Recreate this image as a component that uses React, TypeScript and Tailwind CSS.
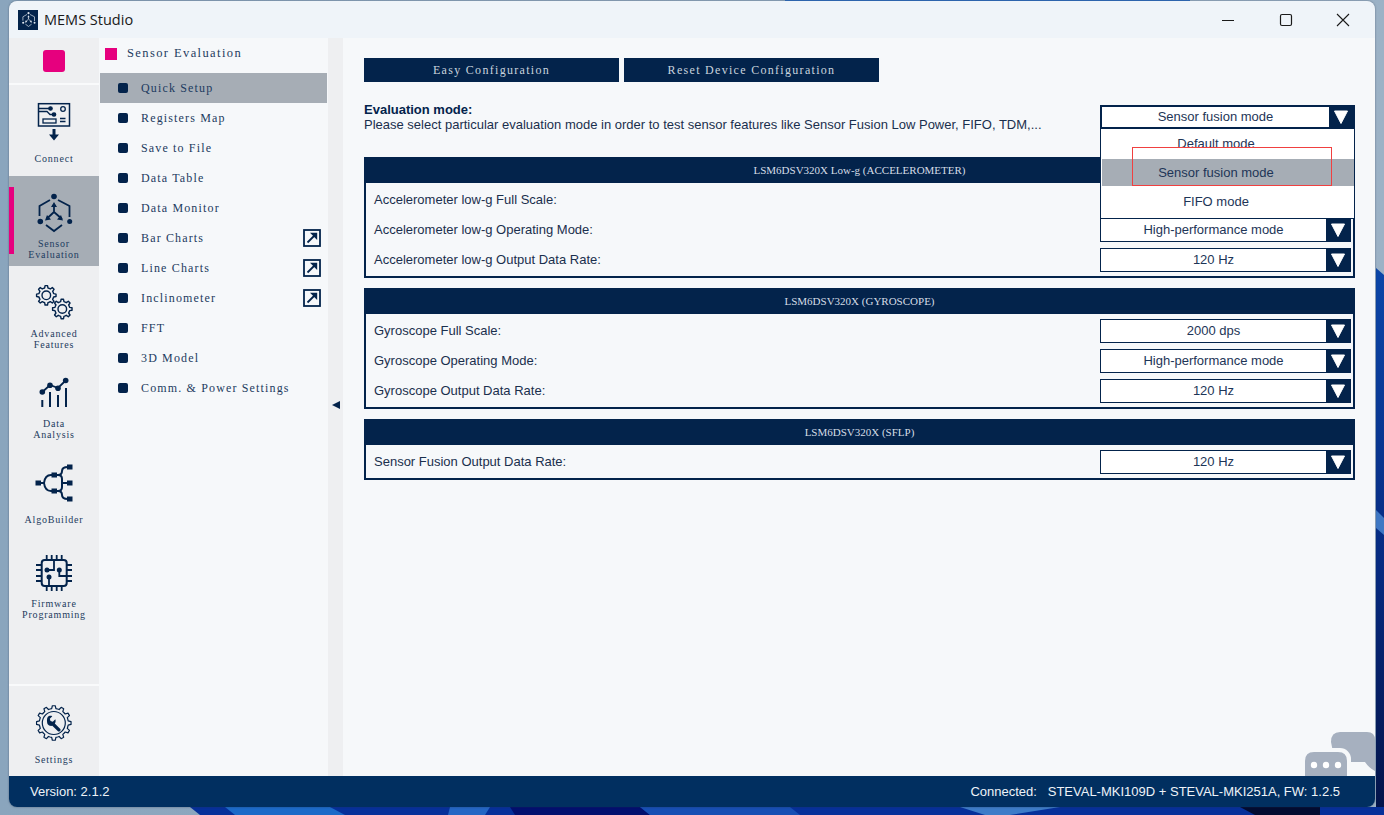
import React from "react";

const navy = "#03234b";

function gearPath(cx: number, cy: number, ro: number, ri: number, teeth: number) {
  const pts: string[] = [];
  const step = (Math.PI * 2) / teeth;
  for (let i = 0; i < teeth; i++) {
    const a = i * step;
    const list: [number, number][] = [
      [ri, a - step * 0.5],
      [ri, a - step * 0.28],
      [ro, a - step * 0.16],
      [ro, a + step * 0.16],
      [ri, a + step * 0.28],
    ];
    list.forEach(([r, t]) => {
      pts.push((cx + r * Math.cos(t)).toFixed(2) + " " + (cy + r * Math.sin(t)).toFixed(2));
    });
  }
  return "M" + pts.join("L") + "Z";
}

function HexGlyph({ color, className }: { color: string; className?: string }) {
  return (
    <svg viewBox="33 190 40 44" className={className} fill="none" stroke={color}>
      <path d="M38.5 215V205L49 199M57 199L68.5 205V216M45 224L53 230L61 224" strokeWidth="1.800" />
      <circle cx="53" cy="195.500" r="2.800" fill={color} stroke="none" />
      <circle cx="39.300" cy="220.500" r="2.800" fill={color} stroke="none" />
      <circle cx="68.700" cy="220.500" r="2.500" fill={color} stroke="none" />
      <path d="M53 211V204M53 211L45.500 218M53 211L61 218" strokeWidth="1.800" />
      <path d="M50 206L53 201L56 206Z M44 219.500L50 218.500L46 214Z M62 219.500L56 218.500L60 214Z" fill={color} stroke="none" />
    </svg>
  );
}

function ConnectIcon() {
  return (
    <svg viewBox="34 102 40 42" className="w-10 h-[42px]" fill="none" stroke={navy} strokeWidth="1.300">
      <rect x="38.500" y="104.700" width="31" height="22.300" strokeWidth="1.500" />
      <path d="M38.500 109.500H50M38.500 112.500H47L50 115.500H53" />
      <circle cx="50.500" cy="109.500" r="1.700" fill={navy} />
      <circle cx="54" cy="115.500" r="1.700" fill={navy} />
      <circle cx="63" cy="110" r="2.300" />
      <rect x="43" y="120" width="13" height="4" />
      <path d="M60 119.500H65.500M60 122.500H65.500" />
      <path d="M52.500 130H55.500V135.500H59L54 141.500L49 135.500H52.500Z" fill={navy} stroke="none" />
    </svg>
  );
}

function GearsIcon() {
  return (
    <svg viewBox="33 282 40 40" className="w-10 h-10" fill="none" stroke={navy} strokeWidth="1.400" strokeLinejoin="round">
      <path d={gearPath(45.300, 294.300, 9.800, 7.500, 8)} />
      <circle cx="45.300" cy="294.300" r="4.300" />
      <path d={gearPath(61.300, 308, 9.800, 7.500, 8)} />
      <circle cx="61.300" cy="308" r="4.300" />
    </svg>
  );
}

function AnalysisIcon() {
  return (
    <svg viewBox="34 375 40 36" className="w-10 h-9" fill="none" stroke={navy}>
      <path d="M42.300 392L50 385L58 388L65.700 380.500" strokeWidth="1.800" />
      <circle cx="42.300" cy="392" r="2.800" fill={navy} stroke="none" />
      <circle cx="50" cy="385.300" r="2.800" fill={navy} stroke="none" />
      <circle cx="58" cy="388.300" r="2.800" fill={navy} stroke="none" />
      <circle cx="65.700" cy="380.500" r="2.800" fill={navy} stroke="none" />
      <path d="M42.300 400V407M50 392V407M58 395V407M66 388V407" strokeWidth="2" />
    </svg>
  );
}

function AlgoIcon() {
  return (
    <svg viewBox="34 462 40 40" className="w-10 h-10" fill="none" stroke={navy} strokeWidth="2">
      <path d="M38 482H44Q45 474 51 474H58Q62 474 62 470Q62 466 68 466M58 474Q62 474 62 478V486Q62 490 58 490H51Q45 490 44 482M62 482H70M58 490Q62 490 62 494Q62 498 68 498" />
      <g fill={navy} stroke="none">
        <rect x="35.500" y="479.500" width="5.500" height="5" />
        <rect x="51.500" y="471.500" width="5.500" height="5" />
        <rect x="51.500" y="487.500" width="5.500" height="5" />
        <rect x="67" y="463.500" width="5.500" height="5" />
        <rect x="67" y="479.500" width="5.500" height="5" />
        <rect x="67" y="495.500" width="5.500" height="5" />
      </g>
    </svg>
  );
}

function ChipIcon() {
  return (
    <svg viewBox="34 552 40 40" className="w-10 h-10" fill="none" stroke={navy} strokeWidth="1.800">
      <rect x="41.700" y="559" width="25" height="26" rx="3" strokeWidth="2" />
      <path d="M46.700 554V559M51.700 554V559M56.700 554V559M61.700 554V559M46.700 585V590M51.700 585V590M56.700 585V590M61.700 585V590" />
      <path d="M36 564H41.700M36 569H41.700M36 575H41.700M36 580H41.700M66.700 564H72M66.700 569H72M66.700 575H72M66.700 580H72" />
      <path d="M47 569H54V559M59.300 569V575H66.700M49 576V585" />
      <circle cx="47" cy="569" r="2.500" fill={navy} stroke="none" />
      <circle cx="59.300" cy="569" r="2.500" fill={navy} stroke="none" />
      <circle cx="49" cy="576" r="2.500" fill={navy} stroke="none" />
    </svg>
  );
}

function SettingsIcon() {
  return (
    <svg viewBox="34 702 40 40" className="w-10 h-10" fill="none" stroke={navy} strokeWidth="1.200" strokeLinejoin="round">
      <path d={gearPath(53.800, 722, 17.300, 14.500, 12)} />
      <circle cx="53.800" cy="722" r="11.500" />
      <path
        d="M47.500 716.500C48 715 50.500 714.300 52.300 715.200L49.800 717.700L50.500 720L52.800 720.700L55.300 718.200C56 720 55.500 721.700 54.800 722.500L60.300 728C61 729 60.500 729.800 59.800 730.300C59 730.800 58.300 730.700 57.700 730L52.300 724.800C50.500 725.200 48.500 724.500 47.500 723C46.800 721 46.800 718 47.500 716.500Z"
        fill={navy}
        stroke="none"
      />
    </svg>
  );
}

function RailItem({
  label,
  icon,
  active,
  tall,
}: {
  label: string[];
  icon: React.ReactNode;
  active?: boolean;
  tall?: boolean;
}) {
  return (
    <div
      className={
        "relative flex flex-col items-center " +
        (tall ? "h-[91px]" : "h-[90px]") +
        (active ? " bg-[#a6adb5]" : "")
      }
    >
      {active && <div className="absolute left-0 top-[11px] w-[5px] h-[67px] bg-[#e6007e]" />}
      <div className="h-[50px] mt-3 flex items-center justify-center">{icon}</div>
      <div className="h-[22px] flex flex-col items-center justify-center text-[10px] leading-[11px] tracking-[0.8px] text-[#1d3b60]">
        {label.map((l) => (
          <span key={l}>{l}</span>
        ))}
      </div>
    </div>
  );
}

function PopoutIcon() {
  return (
    <svg viewBox="0 0 18 18" className="w-[18px] h-[18px] mr-[6px]" fill="none" stroke={navy}>
      <rect x="1" y="1" width="16" height="16" strokeWidth="1.800" />
      <path d="M4.500 13.500L12 6" strokeWidth="1.800" />
      <path d="M7 3.800H14.200V11Z" fill={navy} stroke="none" />
    </svg>
  );
}

function NavRow({ label, active, popout }: { label: string; active?: boolean; popout?: boolean }) {
  return (
    <div className={"h-[30px] mr-px ml-px flex items-center " + (active ? "bg-[#a6adb5]" : "")}>
      <div className="w-[10px] h-[10px] ml-[18px] rounded-[2px] bg-[#03234b]" />
      <span className="ml-[13px] flex-1 text-[12px] tracking-[1.15px] text-[#1d3b60]">{label}</span>
      {popout && <PopoutIcon />}
    </div>
  );
}

function Arrow({ className }: { className: string }) {
  return (
    <div className={"flex items-center justify-center bg-[#03234b] " + className}>
      <svg viewBox="0 0 16 16" className="w-4 h-4">
        <path d="M1.500 2H14.500L8 14.500Z" fill="#fff" stroke="#fff" strokeLinejoin="round" />
      </svg>
    </div>
  );
}

function Select({ value }: { value: string }) {
  return (
    <div className="w-[251px] h-6 flex border border-[#03234b] bg-white">
      <div className="flex-1 flex items-center justify-center text-[13px] text-[#1d3557]">{value}</div>
      <Arrow className="w-[24px]" />
    </div>
  );
}

function Row({ label, value }: { label: string; value?: string }) {
  return (
    <div className="h-[30px] pl-2 pr-[2px] flex items-center justify-between">
      <span className="text-[13px] text-[#1a2f4d]">{label}</span>
      {value && <Select value={value} />}
    </div>
  );
}

function Panel({ title, children }: { title: string; children: React.ReactNode }) {
  return (
    <div className="flex flex-col">
      <div className="h-[26px] bg-[#03234b] flex items-center justify-center font-['Liberation_Serif',serif] text-[11px] text-[#d5dde6]">
        {title}
      </div>
      <div className="border-2 border-t-0 border-[#03234b] pt-[2px] pb-px">{children}</div>
    </div>
  );
}

function Wallpaper() {
  return (
    <svg viewBox="0 0 1384 815" className="absolute inset-0 w-[1384px] h-[815px]">
      <defs>
        <linearGradient id="sky" x1="0" y1="0" x2="1" y2="0">
          <stop offset="0" stopColor="#8aa5bd" />
          <stop offset="1" stopColor="#9cb2c6" />
        </linearGradient>
        <linearGradient id="deep" x1="0" y1="0" x2="0" y2="1">
          <stop offset="0" stopColor="#0b46a8" />
          <stop offset="0.55" stopColor="#062a80" />
          <stop offset="1" stopColor="#031348" />
        </linearGradient>
      </defs>
      <rect width="1384" height="815" fill="url(#sky)" />
      <rect x="785" y="0" width="405" height="2" fill="#2f6fc0" />
      <path d="M1376 268L1384 275V815H1376Z" fill="url(#deep)" />
      <path d="M1376 510L1384 518V535L1376 528Z" fill="#3f78c4" />
      <path d="M190 807H1384V815H200Z" fill="#06309a" />
      <path d="M225 807H330L345 815H235Z" fill="#1c6ac8" />
      <path d="M450 807H490L485 815H448Z" fill="#2466c4" />
      <path d="M510 807H640L650 815H515Z" fill="#020f6e" />
      <path d="M640 807H790L800 815H650Z" fill="#174fb4" />
      <path d="M960 807H1060L1010 815H985Z" fill="#3d7cc8" />
      <path d="M1240 807H1320L1320 815H1255Z" fill="#020b30" />
    </svg>
  );
}

export default function App() {
  return (
    <div className="relative w-[1384px] h-[815px] overflow-hidden pl-[9px] pt-px font-['Liberation_Sans',Arial,sans-serif]">
      <Wallpaper />
      <div className="relative w-[1366px] h-[806px] flex flex-col rounded-lg overflow-hidden shadow-[0_0_2px_rgba(40,50,70,0.6)]">
        <div className="h-[37px] shrink-0 flex items-center bg-[#eff4f9]">
          <div className="ml-[9px] w-5 h-5 bg-[#03234b] flex items-center justify-center">
            <HexGlyph color="#dfe6ee" className="w-[17px] h-[17px]" />
          </div>
          <span className="ml-[6px] font-['Open_Sans',sans-serif] text-[14.5px] text-[#1a1a1a]">MEMS Studio</span>
          <div className="ml-auto flex items-center text-[#1a1a1a]">
            <svg viewBox="0 0 14 14" className="w-[14px] h-[14px] mr-[44px]" fill="none" stroke="currentColor">
              <path d="M1 7.500H13" strokeWidth="1.200" />
            </svg>
            <svg viewBox="0 0 14 14" className="w-[14px] h-[14px] mr-[43px]" fill="none" stroke="currentColor">
              <rect x="1.500" y="1.500" width="11" height="11" rx="1.500" strokeWidth="1.200" />
            </svg>
            <svg viewBox="0 0 14 14" className="w-[14px] h-[14px] mr-[25px]" fill="none" stroke="currentColor">
              <path d="M1 1L13 13M13 1L1 13" strokeWidth="1.100" />
            </svg>
          </div>
        </div>

        <div className="relative flex-1 flex min-h-0 bg-[#f6f8fa]">
          <div className="w-[90px] shrink-0 flex flex-col bg-[#eeeff1] font-['Liberation_Serif',serif]">
            <div className="h-[45px] flex items-center justify-center">
              <div className="w-[22px] h-[22px] rounded-[3px] bg-[#e6007e]" />
            </div>
            <div className="h-[2px] bg-[#f9fafb]" />
            <RailItem tall label={["Connect"]} icon={<ConnectIcon />} />
            <RailItem active label={["Sensor", "Evaluation"]} icon={<HexGlyph color={navy} className="w-10 h-11" />} />
            <RailItem label={["Advanced", "Features"]} icon={<GearsIcon />} />
            <RailItem label={["Data", "Analysis"]} icon={<AnalysisIcon />} />
            <RailItem label={["AlgoBuilder"]} icon={<AlgoIcon />} />
            <RailItem label={["Firmware", "Programming"]} icon={<ChipIcon />} />
            <div className="flex-1" />
            <div className="h-[2px] bg-[#f9fafb]" />
            <RailItem label={["Settings"]} icon={<SettingsIcon />} />
          </div>

          <div className="w-[229px] shrink-0 font-['Liberation_Serif',serif]">
            <div className="h-[35px] pb-[4px] flex items-center">
              <div className="ml-[6px] w-3 h-3 bg-[#e6007e]" />
              <span className="ml-[10px] text-[12.5px] tracking-[1.4px] text-[#1d3b60]">Sensor Evaluation</span>
            </div>
            <NavRow active label="Quick Setup" />
            <NavRow label="Registers Map" />
            <NavRow label="Save to File" />
            <NavRow label="Data Table" />
            <NavRow label="Data Monitor" />
            <NavRow popout label="Bar Charts" />
            <NavRow popout label="Line Charts" />
            <NavRow popout label="Inclinometer" />
            <NavRow label="FFT" />
            <NavRow label="3D Model" />
            <NavRow label="Comm. & Power Settings" />
          </div>

          <div className="w-[15px] shrink-0 bg-[#eeeff1] flex items-start justify-center pt-[363px]">
            <svg viewBox="0 0 8 8" className="w-2 h-2">
              <path d="M0 4L8 0V8Z" fill={navy} />
            </svg>
          </div>

          <div className="flex-1 min-w-0 pl-[21px] pr-5 pt-5">
            <div className="flex gap-[5px]">
              <div className="w-[255px] h-6 bg-[#03234b] flex items-center justify-center font-['Liberation_Serif',serif] text-[12px] tracking-[1.3px] text-[#c9d3de]">
                Easy Configuration
              </div>
              <div className="w-[255px] h-6 bg-[#03234b] flex items-center justify-center font-['Liberation_Serif',serif] text-[12px] tracking-[1.3px] text-[#c9d3de]">
                Reset Device Configuration
              </div>
            </div>

            <div className="mt-5 mb-[25px] h-[30px] flex justify-between">
              <div className="text-[13px] leading-[15px] text-[#1a2f4d]">
                <div className="font-bold text-[#03234b]">Evaluation mode:</div>
                <div>Please select particular evaluation mode in order to test sensor features like Sensor Fusion Low Power, FIFO, TDM,...</div>
              </div>
              <div className="relative mt-[3px] w-[255px] h-6 flex border-2 border-[#03234b] bg-white z-10">
                <div className="flex-1 flex items-center justify-center text-[13px] text-[#1d3557]">Sensor fusion mode</div>
                <Arrow className="w-[24px]" />
                <div className="absolute left-[-2px] top-[22px] w-[255px] h-[90px] border border-t-0 border-[#03234b] bg-white text-[13px] text-[#1d3557]">
                  <div className="h-[30px] pr-[23px] flex items-center justify-center">Default mode</div>
                  <div className="h-[27px] ml-px pr-[24px] flex items-center justify-center bg-[#a6adb5]">Sensor fusion mode</div>
                  <div className="h-[31px] pr-[23px] flex items-center justify-center">FIFO mode</div>
                  <div className="absolute left-[31px] top-[18px] w-[200px] h-[39px] border border-[#f04040]" />
                </div>
              </div>
            </div>

            <div className="flex flex-col gap-[10px]">
              <Panel title="LSM6DSV320X Low-g (ACCELEROMETER)">
                <Row label="Accelerometer low-g Full Scale:" />
                <Row label="Accelerometer low-g Operating Mode:" value="High-performance mode" />
                <Row label="Accelerometer low-g Output Data Rate:" value="120 Hz" />
              </Panel>
              <Panel title="LSM6DSV320X (GYROSCOPE)">
                <Row label="Gyroscope Full Scale:" value="2000 dps" />
                <Row label="Gyroscope Operating Mode:" value="High-performance mode" />
                <Row label="Gyroscope Output Data Rate:" value="120 Hz" />
              </Panel>
              <Panel title="LSM6DSV320X (SFLP)">
                <Row label="Sensor Fusion Output Data Rate:" value="120 Hz" />
              </Panel>
            </div>
          </div>
        </div>

        <div className="h-[31px] shrink-0 bg-[#012f60] flex items-center justify-between pl-[21px] pr-[35px] text-[13px] text-[#eef3f8]">
          <span>Version: 2.1.2</span>
          <span className="whitespace-pre">Connected:   STEVAL-MKI109D + STEVAL-MKI251A, FW: 1.2.5</span>
        </div>

        <svg viewBox="0 0 70 44" className="absolute right-0 bottom-[31px] w-[70px] h-[44px] z-20">
          <path d="M26 10Q26 0 35 0H62Q70 0 70 8V39Q64 36 60 30H30Z" fill="#a6b0bf" />
          <rect x="-2" y="16" width="48" height="40" rx="11" fill="#f6f8fa" />
          <path d="M0 44V29Q0 20 9 20H33Q42 20 42 29V44Z" fill="#a6b0bf" />
          <circle cx="9" cy="33" r="3.200" fill="#fff" />
          <circle cx="21" cy="33" r="3.200" fill="#fff" />
          <circle cx="33" cy="33" r="3.200" fill="#fff" />
        </svg>
      </div>
    </div>
  );
}
